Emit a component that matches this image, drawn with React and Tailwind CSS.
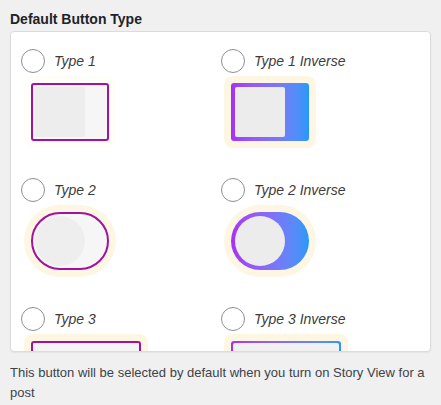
import React from "react";

const Radio = ({ label }) => (
  <div className="flex items-center h-6">
    <span className="w-6 h-6 rounded-full border border-[#8c8f94] bg-white shrink-0" />
    <span className="ml-[9px] italic text-[14px] leading-5 text-[#3c3c3c]">{label}</span>
  </div>
);

const Type1 = () => (
  <div className="w-[78px] h-[58px] rounded-[3px] border-2 border-[#a3129f] bg-[#f6f6f6] p-[2px] shadow-[0_0_0_7px_#fffdf7]">
    <div className="w-[50px] h-[50px] rounded-[2px] bg-[#ededed]" />
  </div>
);

const Type1Inverse = () => (
  <div className="w-[78px] h-[58px] rounded-[3px] bg-linear-to-r from-[#a72ff5] to-[#2299f8] p-[4px] shadow-[0_0_0_7px_#fdf6e2]">
    <div className="w-[50px] h-[50px] rounded-[2px] bg-[#ececec]" />
  </div>
);

const Type2 = () => (
  <div className="w-[78px] h-[58px] rounded-full border-2 border-[#a3129f] bg-[#f6f6f6] p-[2px] shadow-[0_0_0_7px_#fdf6e2]">
    <div className="w-[50px] h-[50px] rounded-full bg-[#eeeeee]" />
  </div>
);

const Type2Inverse = () => (
  <div className="w-[78px] h-[58px] rounded-full bg-linear-to-r from-[#a72ff5] to-[#2299f8] p-[4px] shadow-[0_0_0_7px_#fdf6e2]">
    <div className="w-[50px] h-[50px] rounded-full bg-[#ececec]" />
  </div>
);

const Type3 = () => (
  <div className="w-[110px] h-[58px] rounded-[3px] border-2 border-[#a3129f] bg-[#f5f5f5] shadow-[0_0_0_7px_#fdf6e2]" />
);

const Type3Inverse = () => (
  <div className="w-[110px] h-[58px] rounded-[3px] bg-linear-to-r from-[#a72ff5] to-[#2299f8] p-[2px] shadow-[0_0_0_7px_#fdf6e2]">
    <div className="w-full h-full rounded-[2px] bg-[#f1f1f1]" />
  </div>
);

const Cell = ({ label, children }) => (
  <div className="flex flex-col">
    <Radio label={label} />
    <div className="mt-[10px] ml-[10px] mb-[37px]">{children}</div>
  </div>
);

export default function App() {
  return (
    <div
      className="min-h-[405px] w-[441px] bg-[#f0f0f1] px-[10px] pt-[9px]"
      style={{ fontFamily: '"Liberation Sans", Arial, sans-serif' }}
    >
      <div className="text-[14px] leading-5 font-bold text-[#1d2327] mb-[2px]">Default Button Type</div>
      <div className="w-[421px] h-[321px] overflow-hidden rounded-[4px] border border-[#dcdcde] bg-white shadow-[0_1px_2px_rgba(0,0,0,0.06)]">
        <div className="grid grid-cols-[200px_200px] pl-[10px] pt-[17px]">
          <Cell label="Type 1"><Type1 /></Cell>
          <Cell label="Type 1 Inverse"><Type1Inverse /></Cell>
          <Cell label="Type 2"><Type2 /></Cell>
          <Cell label="Type 2 Inverse"><Type2Inverse /></Cell>
          <Cell label="Type 3"><Type3 /></Cell>
          <Cell label="Type 3 Inverse"><Type3Inverse /></Cell>
        </div>
      </div>
      <p className="mt-[11px] w-[420px] text-[13px] leading-[19.5px] text-[#3c434a]">
        This button will be selected by default when you turn on Story View for a post
      </p>
    </div>
  );
}
